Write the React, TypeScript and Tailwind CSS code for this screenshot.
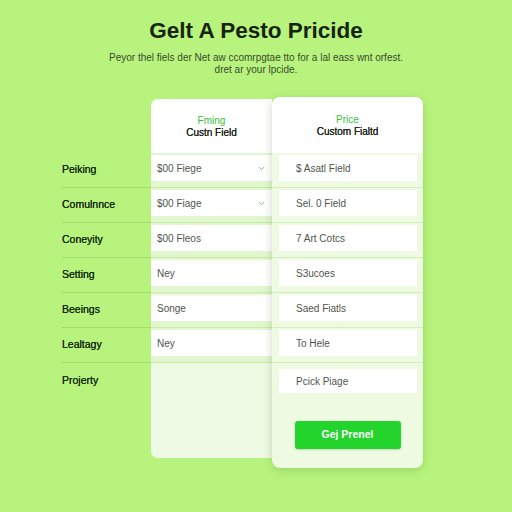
import { ChevronDown } from 'lucide-react'

const labels = ['Peiking', 'Comulnnce', 'Coneyity', 'Setting', 'Beeings', 'Lealtagy']

const leftCells = [
  { text: '$00 Fiege', select: true },
  { text: '$00 Fiage', select: true },
  { text: '$00 Fleos', select: false },
  { text: 'Ney', select: false },
  { text: 'Songe', select: false },
  { text: 'Ney', select: false },
]

const rightCells = ['$ Asatl Field', 'Sel. 0 Field', '7 Art Cotcs', 'S3ucoes', 'Saed Fiatls', 'To Hele']

export default function App() {
  return (
    <div
      className="w-[512px] h-[512px] bg-[#b8f47d] flex flex-col items-center pt-[18px] overflow-hidden"
      style={{ fontFamily: '"Liberation Sans", Arial, sans-serif' }}
    >
      <h1 className="text-[22.5px] leading-[26px] font-bold text-[#15230f]">
        Gelt A Pesto Pricide
      </h1>
      <p className="mt-[8px] text-[10px] leading-[12px] text-[#3a4a30] text-center">
        Peyor thel fiels der Net aw ccomrpgtae tto for a lal eass wnt orfest.
        <br />
        dret ar your lpcide.
      </p>

      <div className="mt-[21px] flex items-start self-start ml-[62px]">
        {/* row labels */}
        <div className="w-[89px] flex flex-col">
          <div className="h-[56px]" />
          {labels.map((l) => (
            <div
              key={l}
              className="h-[35px] border-b border-[#a2dc70] flex items-center text-[10.5px] text-[#142a0d] [text-shadow:0_0_0.4px_#142a0d]"
            >
              {l}
            </div>
          ))}
          <div className="h-[36px] flex items-center text-[10.5px] text-[#142a0d] [text-shadow:0_0_0.4px_#142a0d]">
            Projerty
          </div>
        </div>

        {/* left card */}
        <div className="mt-[2px] w-[121px] h-[359px] rounded-l-[7px] bg-[#eef9e3]/80 flex flex-col overflow-hidden">
          <div className="h-[54px] bg-white flex flex-col items-center justify-center pt-[2px]">
            <span className="text-[10px] leading-[12px] text-[#37c23a]">Fming</span>
            <span className="text-[10px] leading-[12px] text-[#1d2418] [text-shadow:0_0_0.3px_#1d2418]">Custn Field</span>
          </div>
          {leftCells.map((c, i) => (
            <div key={i} className="h-[35px] border-b border-[#c9eaa9] pt-[2px] bg-[#e2f7cf]">
              <div className="h-[26px] bg-white flex items-center justify-between pl-[6px] pr-[6px] text-[10px] text-[#50554b]">
                <span>{c.text}</span>
                {c.select && <ChevronDown size={9} strokeWidth={2} className="text-[#5aa64a]" />}
              </div>
            </div>
          ))}
          <div className="flex-1 bg-[#eefae3]" />
        </div>

        {/* right card */}
        <div className="w-[151px] h-[371px] rounded-[8px] bg-[#eefae2] shadow-[0_2px_10px_rgba(60,110,30,0.25)] flex flex-col overflow-hidden relative">
          <div className="h-[56px] bg-white flex flex-col items-center justify-center pt-[2px]">
            <span className="text-[10px] leading-[12px] text-[#37c23a]">Price</span>
            <span className="text-[10px] leading-[12px] text-[#1d2418] [text-shadow:0_0_0.3px_#1d2418]">Custom Fialtd</span>
          </div>
          {rightCells.map((t, i) => (
            <div key={i} className="h-[35px] border-b border-[#d3eebd] pt-[2px] px-[7px] pr-[6px]">
              <div className="h-[26px] bg-white flex items-center pl-[17px] text-[10px] text-[#50554b]">{t}</div>
            </div>
          ))}
          <div className="pt-[6px] px-[7px] pr-[6px]">
            <div className="h-[24px] bg-white flex items-center pl-[17px] text-[10px] text-[#50554b]">Pcick Piage</div>
          </div>
          <div className="flex justify-center mt-[28px]">
            <button className="w-[106px] h-[28px] rounded-[3px] bg-[#22d42b] text-white text-[10.5px] font-bold shadow-[0_1px_2px_rgba(0,80,0,0.2)]">
              Gej Prenel
            </button>
          </div>
        </div>
      </div>
    </div>
  )
}
